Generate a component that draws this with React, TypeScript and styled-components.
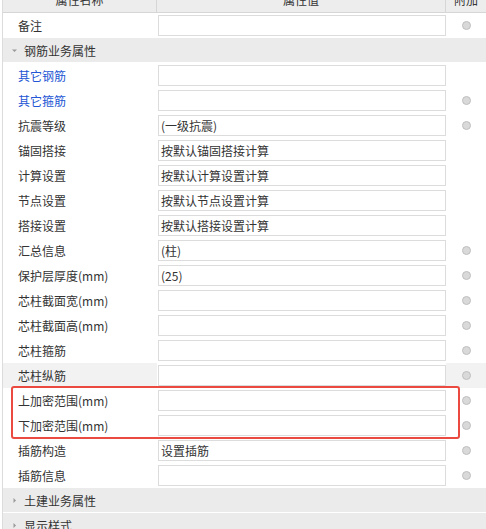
import React from "react";
import styled, { createGlobalStyle } from "styled-components";

const Global = createGlobalStyle`
  html, body { margin: 0; padding: 0; background: #fff; overflow: hidden; }
  body { font-family: "Microsoft YaHei", "Noto Sans CJK SC", "Noto Sans", sans-serif; font-size: 12px; color: #333; }
`;

const Page = styled.div`
  position: relative;
  width: 486px;
  height: 529px;
  overflow: hidden;
`;

const Table = styled.div`
  margin-top: -13px;
  margin-left: 2px;
  border-left: 1px solid #dcdcdc;
  display: flex;
  flex-direction: column;
`;

const cols = "154px 289px 1fr";

const HeaderRow = styled.div`
  display: grid;
  grid-template-columns: ${cols};
  height: 25px;
  background: #ededed;
  border-bottom: 1px solid #d6d6d6;
`;

const HeaderCell = styled.div<{ $last?: boolean }>`
  display: flex;
  align-items: center;
  justify-content: center;
  border-right: ${(p) => (p.$last ? "none" : "1px solid #d6d6d6")};
  color: #333;
  line-height: 1;
`;

const Row = styled.div<{ $hover?: boolean }>`
  display: grid;
  grid-template-columns: ${cols};
  height: 25px;
  background: ${(p) => (p.$hover ? "#f2f2f2" : "#fff")};
`;

const NameCell = styled.div<{ $blue?: boolean }>`
  display: flex;
  align-items: center;
  padding-left: 15px;
  color: ${(p) => (p.$blue ? "#2356d4" : "#333")};
  white-space: nowrap;
`;

const ValueCell = styled.div`
  display: flex;
  align-items: center;
  padding: 0 0 0 1px;
  background: #fff;
`;

const Input = styled.div`
  box-sizing: border-box;
  width: 288px;
  height: 21px;
  border: 1px solid #dcdcdc;
  background: #fff;
  padding-left: 2px;
  display: flex;
  align-items: center;
  color: #333;
  white-space: nowrap;
`;

const ExtraCell = styled.div`
  display: flex;
  align-items: center;
  justify-content: center;
  padding-right: 2px;
`;

const Radio = styled.span`
  box-sizing: border-box;
  width: 9px;
  height: 9px;
  border-radius: 50%;
  background: #d9d9d9;
  border: 1px solid #bfbfbf;
  margin-left: 3px;
`;

const Section = styled.div`
  display: flex;
  align-items: center;
  height: 25px;
  box-sizing: border-box;
  background: #ebebeb;
  border-bottom: 1px solid #fff;
  padding-left: 8px;
  color: #333;
  gap: 6px;
`;

const Caret = styled.svg`
  width: 7px;
  height: 7px;
  flex: none;
`;

const RedBox = styled.div`
  position: absolute;
  left: 11px;
  top: 386px;
  width: 449px;
  height: 53px;
  box-sizing: border-box;
  border: 2px solid #ea4a40;
  border-radius: 3px;
  pointer-events: none;
`;

type Item = { name: string; value?: string; radio: boolean; blue?: boolean; hover?: boolean };

const rebar: Item[] = [
  { name: "其它钢筋", radio: false, blue: true },
  { name: "其它箍筋", radio: true, blue: true },
  { name: "抗震等级", value: "(一级抗震)", radio: true },
  { name: "锚固搭接", value: "按默认锚固搭接计算", radio: false },
  { name: "计算设置", value: "按默认计算设置计算", radio: false },
  { name: "节点设置", value: "按默认节点设置计算", radio: false },
  { name: "搭接设置", value: "按默认搭接设置计算", radio: false },
  { name: "汇总信息", value: "(柱)", radio: true },
  { name: "保护层厚度(mm)", value: "(25)", radio: true },
  { name: "芯柱截面宽(mm)", radio: true },
  { name: "芯柱截面高(mm)", radio: true },
  { name: "芯柱箍筋", radio: true },
  { name: "芯柱纵筋", radio: true, hover: true },
  { name: "上加密范围(mm)", radio: true },
  { name: "下加密范围(mm)", radio: true },
  { name: "插筋构造", value: "设置插筋", radio: true },
  { name: "插筋信息", radio: true },
];

function PropRow({ item }: { item: Item }) {
  return (
    <Row $hover={item.hover}>
      <NameCell $blue={item.blue}>{item.name}</NameCell>
      <ValueCell>
        <Input>{item.value ?? ""}</Input>
      </ValueCell>
      <ExtraCell>{item.radio && <Radio />}</ExtraCell>
    </Row>
  );
}

function SectionRow({ title, open }: { title: string; open: boolean }) {
  return (
    <Section>
      <Caret viewBox="0 0 7 7">
        {open ? (
          <path d="M1 2.5 L6 2.5 L3.5 5 Z" fill="#9a9a9a" />
        ) : (
          <path d="M2.5 1 L5 3.5 L2.5 6 Z" fill="#9a9a9a" />
        )}
      </Caret>
      <span>{title}</span>
    </Section>
  );
}

export default function App() {
  return (
    <Page>
      <Global />
      <Table>
        <HeaderRow>
          <HeaderCell>属性名称</HeaderCell>
          <HeaderCell>属性值</HeaderCell>
          <HeaderCell $last>附加</HeaderCell>
        </HeaderRow>
        <PropRow item={{ name: "备注", radio: true }} />
        <SectionRow title="钢筋业务属性" open />
        {rebar.map((it) => (
          <PropRow key={it.name} item={it} />
        ))}
        <SectionRow title="土建业务属性" open={false} />
        <SectionRow title="显示样式" open={false} />
      </Table>
      <RedBox />
    </Page>
  );
}
